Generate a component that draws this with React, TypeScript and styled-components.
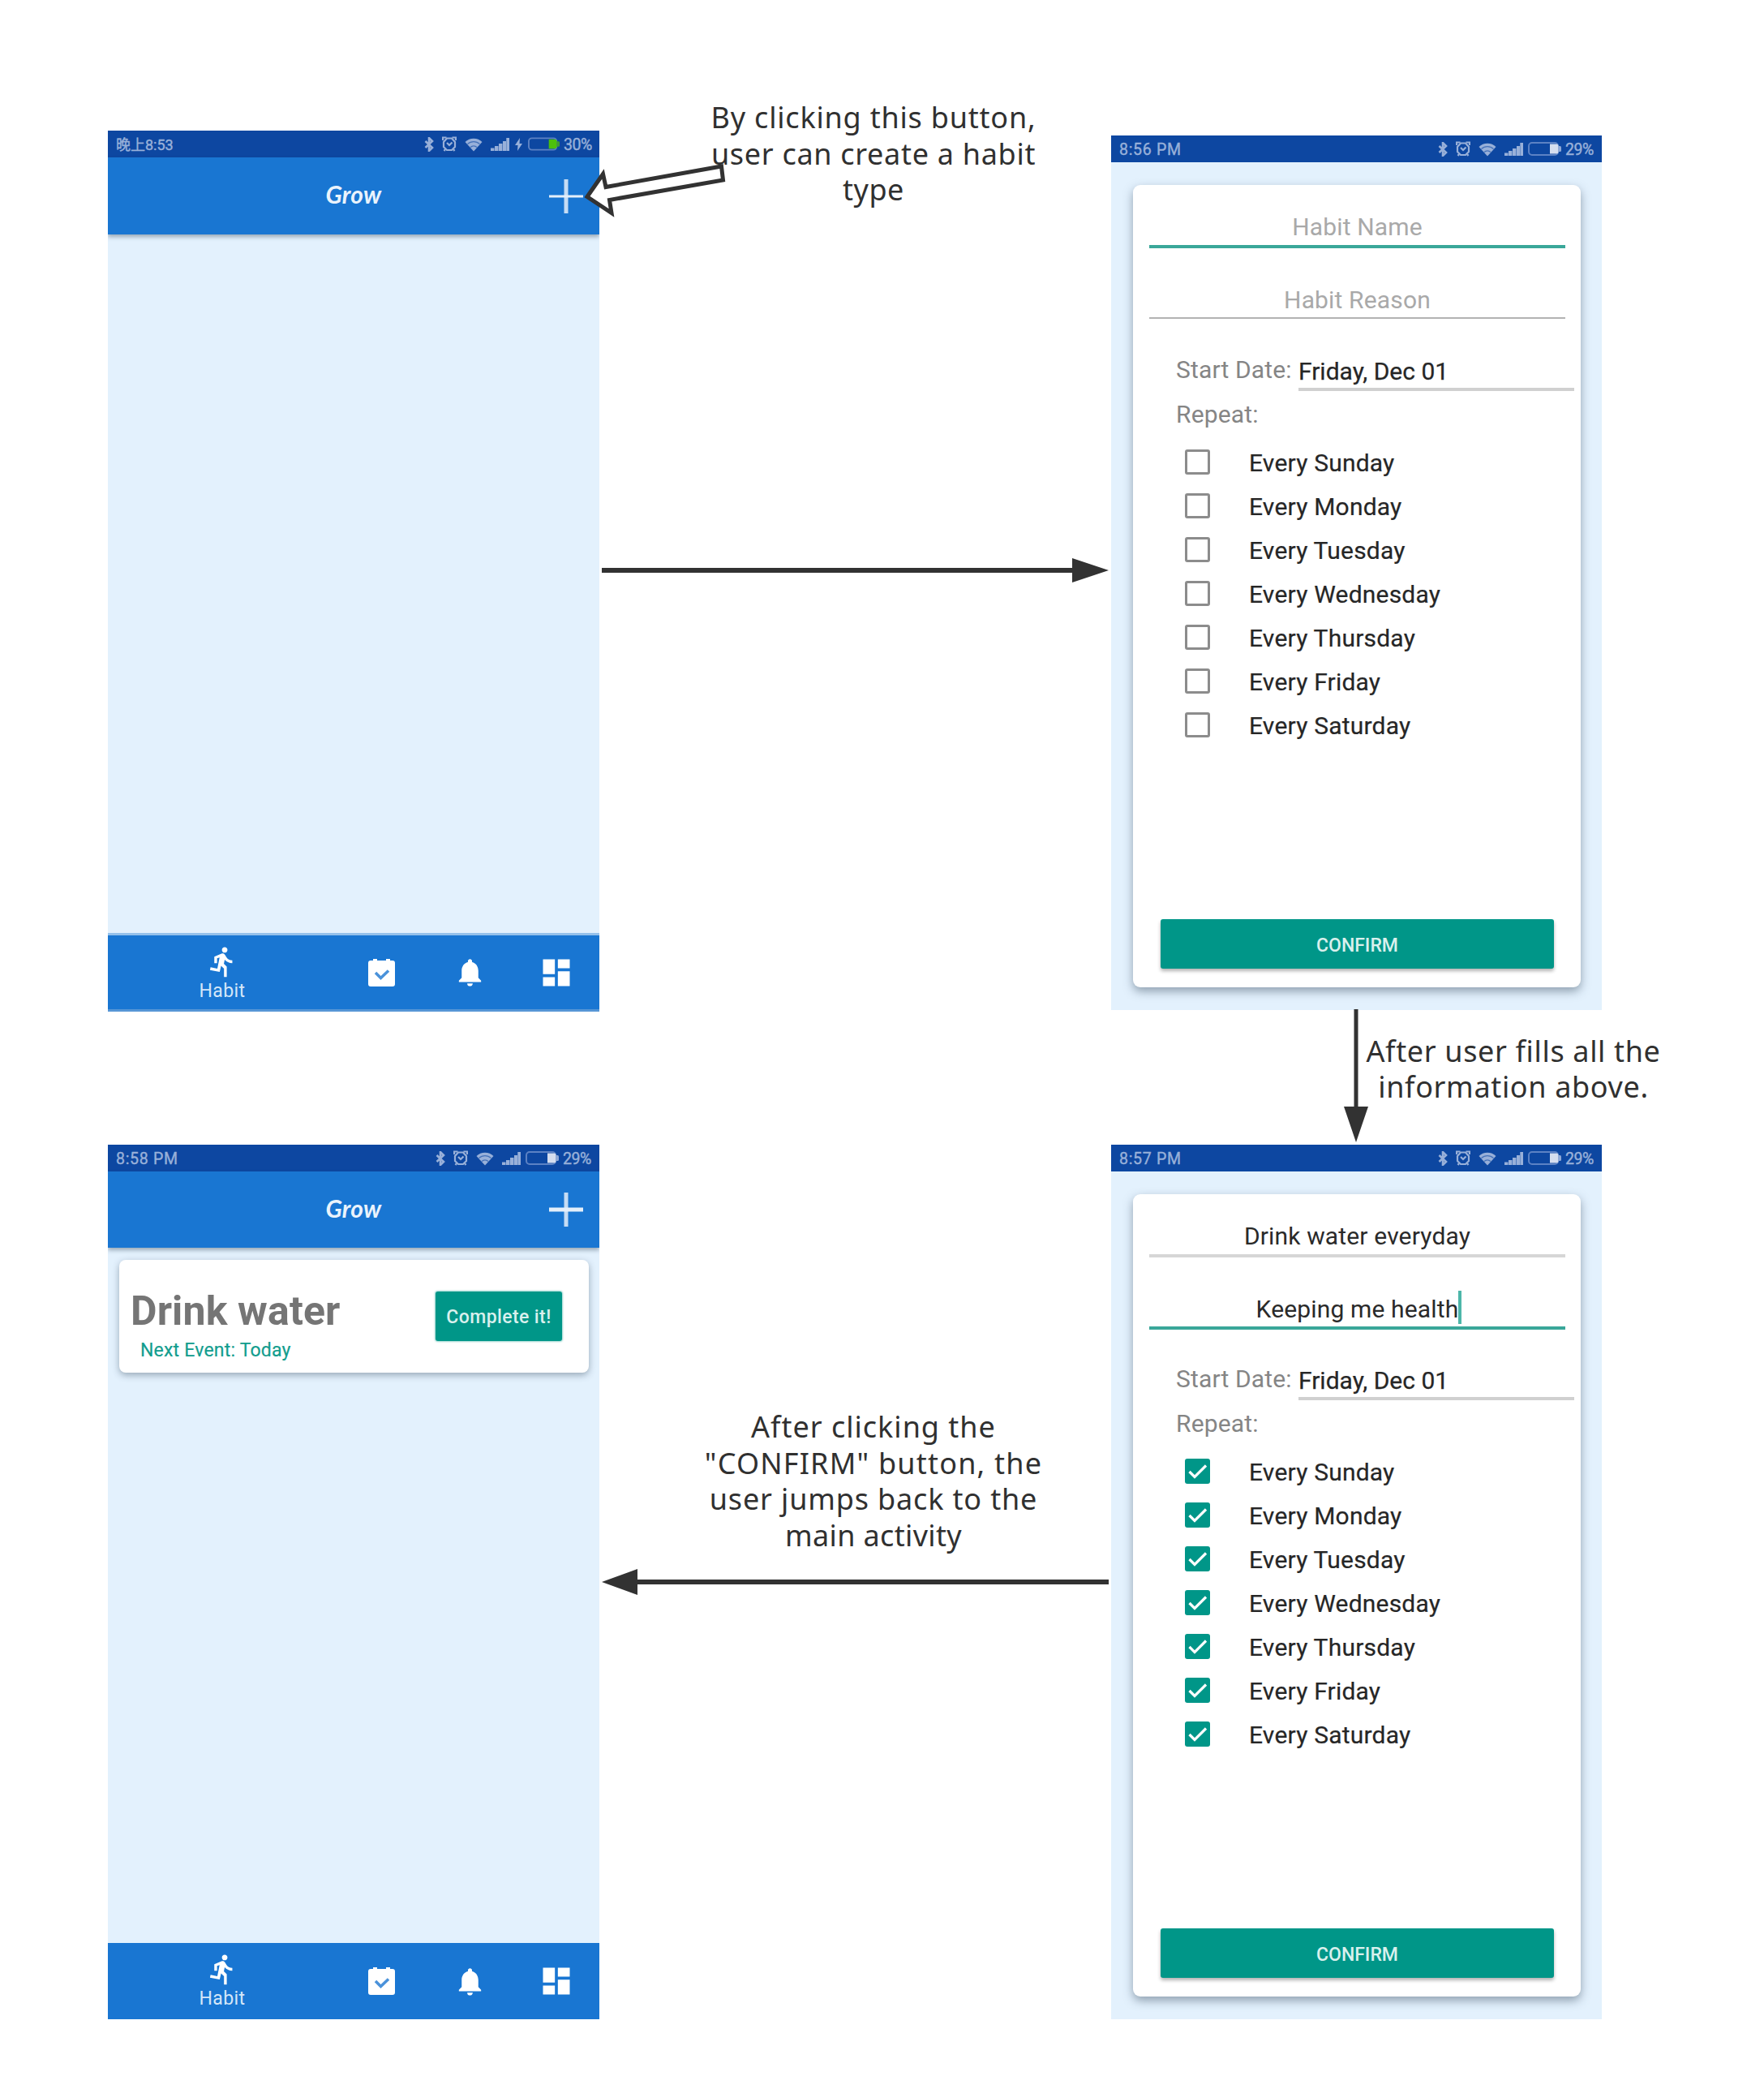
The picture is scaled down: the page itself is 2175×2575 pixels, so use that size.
import React from "react";
import styled, { createGlobalStyle } from "styled-components";
import { MdDashboard, MdDirectionsRun, MdNotifications } from "react-icons/md";

const Global = createGlobalStyle`
  * { box-sizing: border-box; }
  body { margin: 0; background: #fff; }
`;

const Canvas = styled.main`
  position: relative;
  width: 2175px;
  height: 2575px;
  overflow: hidden;
  background: #fff;
  font-family: Roboto, "Noto Sans CJK SC", sans-serif;
`;

/* ---------- diagram nodes ---------- */

const Phone = styled.section<{ $x: number; $y: number; $w: number; $h: number }>`
  position: absolute;
  left: ${(p) => p.$x}px;
  top: ${(p) => p.$y}px;
  width: ${(p) => p.$w}px;
  height: ${(p) => p.$h}px;
  display: flex;
  flex-direction: column;
  background: #e3f1fd;
  overflow: hidden;
  isolation: isolate;
`;

const Note = styled.p<{ $cx: number; $y: number }>`
  position: absolute;
  left: ${(p) => p.$cx - 250}px;
  top: ${(p) => p.$y}px;
  width: 500px;
  margin: 0;
  text-align: center;
  white-space: nowrap;
  font-family: "Noto Sans", sans-serif;
  font-size: 36px;
  line-height: 44.7px;
  color: #303030;
`;

const NoteLine = styled.span<{ $ls: number }>`
  display: block;
  letter-spacing: ${(p) => p.$ls}px;
`;

const Connectors = styled.svg`
  position: absolute;
  left: 0;
  top: 0;
`;

/* ---------- status bar ---------- */

const Bar = styled.div<{ $end: number }>`
  flex: none;
  height: 33px;
  padding: 0 ${(p) => p.$end}px 0 10px;
  display: flex;
  align-items: center;
  background: #0d47a1;
  color: #98b0d9;
  line-height: 33px;
`;

const Clock = styled.span<{ $cjk?: boolean }>`
  flex: 1;
  padding-top: 1px;
  font-size: ${(p) => (p.$cjk ? 18 : 19.5)}px;
  letter-spacing: ${(p) => (p.$cjk ? 0 : 0.7)}px;
  -webkit-text-stroke: 0.4px currentColor;
`;

const Icons = styled.div`
  display: flex;
  align-items: center;
  gap: 10px;
`;

const Power = styled.div<{ $gap: number }>`
  display: flex;
  align-items: center;
  gap: ${(p) => p.$gap}px;
  margin-left: ${(p) => p.$gap}px;
`;

const Percent = styled.span<{ $w: number }>`
  width: ${(p) => p.$w}px;
  margin-left: 5px;
  padding-top: 1px;
  font-size: 19.5px;
  letter-spacing: -0.4px;
  white-space: nowrap;
  -webkit-text-stroke: 0.4px currentColor;
`;

function StatusBar({ time, level, charging }: { time: string; level: string; charging?: boolean }) {
  return (
    <Bar $end={charging ? 8 : 11}>
      <Clock $cjk={charging}>{time}</Clock>
      <Icons>
        <svg width="12" height="18" viewBox="0 0 12 18" fill="none" stroke="currentColor" strokeWidth="2.600">
          <path d="M1.500 5l8.500 8-4 4V1l4 4-8.500 8" />
        </svg>
        <svg width="18" height="19" viewBox="0 0 18 19" fill="none" stroke="currentColor" strokeWidth="2.200">
          <path d="M1 5V1.500h4.500M12.500 1.500H17V5M4 16l-1.500 2M14 16l1.500 2" />
          <path d="M6 2.500h6l4 4.500v6l-4 4H6l-4-4V7z" />
          <path d="M6 8l3 3 3.500-3.500" />
        </svg>
        <svg width="22" height="18" viewBox="0 0 22 18">
          <path d="M11 17.500L0.500 6a15 15 0 0 1 21 0z" fill="currentColor" />
          <path d="M3.500 8.500a11 11 0 0 1 15 0M7 12.500a6 6 0 0 1 8 0" fill="none" stroke="#0d47a1" strokeOpacity="0.600" strokeWidth="1.300" />
        </svg>
        <svg width="23" height="16" viewBox="0 0 23 16" fill="currentColor">
          <path d="M0 12.500h4.500V16H0zM5 10h4.500v6H5zM10 7h4.500v9H10zM15 4h4v12h-4zM19.300 0H23v16h-3.700z" />
        </svg>
      </Icons>
      <Power $gap={charging ? 7 : 6}>
        {charging && (
          <svg width="9" height="16" viewBox="0 0 9 16" fill="currentColor">
            <path d="M6 0L0 9h3.500L3 16l6-9H5.500z" />
          </svg>
        )}
        <svg width={charging ? 39 : 41} height="17" viewBox="0 0 41 17">
          <rect x="1" y="1" width="36" height="15" rx="4" fill="none" stroke="#5c82c4" strokeWidth="2" />
          <path d="M27 2.500h8a2.500 2.500 0 0 1 2.500 2.500v7a2.500 2.500 0 0 1-2.500 2.500h-8z" fill={charging ? "#4cc00c" : "#d5deef"} />
          <path d="M37 5h2.500a1.500 1.500 0 0 1 1.500 1.500v4a1.500 1.500 0 0 1-1.500 1.500H37z" fill={charging ? "#3f9a35" : "#8fa9d6"} />
        </svg>
      </Power>
      <Percent $w={charging ? 36 : 34}>{level}</Percent>
    </Bar>
  );
}

/* ---------- main activity ---------- */

const Header = styled.header<{ $h: number }>`
  flex: none;
  height: ${(p) => p.$h}px;
  padding-right: 20px;
  display: grid;
  grid-template-columns: 1fr auto 1fr;
  align-items: center;
  background: #1976d2;
  box-shadow: 0 3px 5px rgba(40, 60, 80, 0.4);
  z-index: 1;
`;

const Title = styled.h1`
  grid-column: 2;
  margin: -5px 0 0 20px;
  font-family: Lato, sans-serif;
  font-style: italic;
  font-weight: 700;
  font-size: 30px;
  line-height: 36px;
  letter-spacing: 0.3px;
  color: #eaf3fc;
`;

const AddButton = styled.button`
  justify-self: end;
  display: flex;
  padding: 0;
  border: 0;
  background: none;
  color: #e4effa;
`;

const Content = styled.div`
  flex: 1;
  padding: 15px 13px 0 14px;
`;

const HabitCard = styled.article`
  height: 139px;
  padding: 0 33px 0 14px;
  display: flex;
  justify-content: space-between;
  border-radius: 8px;
  background: #fff;
  box-shadow: 0 3px 8px rgba(60, 80, 100, 0.45);
`;

const HabitInfo = styled.div`
  padding-top: 33px;
`;

const HabitName = styled.h2`
  margin: 0;
  font-size: 50px;
  font-weight: 700;
  line-height: 60px;
  letter-spacing: 0.15px;
  color: #757575;
`;

const NextEvent = styled.p`
  margin: 4px 0 0 12px;
  font-size: 23px;
  line-height: 30px;
  letter-spacing: 0.2px;
  color: #129d8e;
  -webkit-text-stroke: 0.2px currentColor;
`;

const CompleteButton = styled.button`
  width: 156px;
  height: 61px;
  margin-top: 39px;
  padding: 3px 0 0;
  border: 0;
  border-radius: 3px;
  background: #009688;
  box-shadow: 0 0 2px 1px rgba(0, 150, 136, 0.4);
  color: #d9f0ed;
  font: 500 23px/30px Roboto, sans-serif;
  letter-spacing: 0.4px;
`;

const Nav = styled.nav<{ $h: number; $edge?: boolean }>`
  flex: none;
  height: ${(p) => p.$h}px;
  display: grid;
  grid-template-columns: 282px 110px 108px 106px;
  border-top: ${(p) => (p.$edge ? "3px solid #95c1eb" : "0")};
  border-bottom: ${(p) => (p.$edge ? "3px solid #5796d6" : "0")};
  background: #1976d2;
  color: #fff;
`;

const Tab = styled.div`
  display: flex;
  align-items: center;
  justify-content: center;
`;

const ActiveTab = styled.div`
  padding-top: 12px;
  display: flex;
  flex-direction: column;
  align-items: center;
  gap: 3px;
  font-size: 23px;
  line-height: 26px;
  letter-spacing: 0.4px;
  color: #d5e6f8;

  svg { color: #fff; }
`;

function BottomNav({ h, edge }: { h: number; edge?: boolean }) {
  return (
    <Nav $h={h} $edge={edge}>
      <ActiveTab>
        <MdDirectionsRun size={41} />
        Habit
      </ActiveTab>
      <Tab>
        <svg width="33" height="34" viewBox="0 0 33 34">
          <path d="M3 2h3V0h5v2h11V0h5v2h3a3 3 0 0 1 3 3V31a3 3 0 0 1-3 3H3a3 3 0 0 1-3-3V5a3 3 0 0 1 3-3z" fill="#fff" />
          <path d="M9 17l6.500 6.500L25 14.500" fill="none" stroke="#4a92da" strokeWidth="3.500" />
        </svg>
      </Tab>
      <Tab>
        <MdNotifications size={41} />
      </Tab>
      <Tab>
        <MdDashboard size={44} />
      </Tab>
    </Nav>
  );
}

function MainScreen(props: { y: number; h: number; time: string; level: string; charging?: boolean; headerH: number; navH: number; edge?: boolean; children?: React.ReactNode }) {
  return (
    <Phone $x={133} $y={props.y} $w={606} $h={props.h}>
      <StatusBar time={props.time} level={props.level} charging={props.charging} />
      <Header $h={props.headerH}>
        <Title>Grow</Title>
        <AddButton aria-label="Add habit">
          <svg width="42" height="42" viewBox="0 0 42 42" stroke="currentColor">
            <path d="M0 21h42" strokeWidth={props.charging ? 3 : 5} />
            <path d="M21 0v42" strokeWidth="5" strokeOpacity="0.850" />
          </svg>
        </AddButton>
      </Header>
      <Content>{props.children}</Content>
      <BottomNav h={props.navH} edge={props.edge} />
    </Phone>
  );
}

/* ---------- habit form ---------- */

const FormCard = styled.form`
  height: 989px;
  margin: 28px 26px 0 27px;
  padding: 32px 0 23px;
  display: flex;
  flex-direction: column;
  border-radius: 9px;
  background: #fff;
  box-shadow: 0 5px 12px rgba(60, 80, 100, 0.5);
  font-size: 30px;
  line-height: 40px;
  letter-spacing: 0.15px;
`;

const Field = styled.div<{ $h: number; $placeholder?: boolean }>`
  height: ${(p) => p.$h}px;
  margin: 0 19px 0 20px;
  text-align: center;
  color: ${(p) => (p.$placeholder ? "#a9a9a9" : "#2a2a2a")};
`;

const FieldText = styled.div`
  height: 40px;
  display: flex;
  justify-content: center;
`;

const Caret = styled.span`
  width: 4px;
  height: 41px;
  margin: -3px -4px 0 0;
  background: #4db6a9;
`;

const Underline = styled.div<{ $focus?: boolean; $thin?: boolean }>`
  height: ${(p) => (p.$focus ? 4 : p.$thin ? 2 : 4)}px;
  margin-top: ${(p) => (p.$thin ? 1 : 2)}px;
  background: ${(p) => (p.$focus ? "#3aa799" : p.$thin ? "#b3b3b3" : "#d6d6d6")};
`;

const DateRow = styled.div`
  height: 55px;
  display: flex;
  padding-left: 53px;
`;

const Label = styled.div`
  width: 151px;
  color: #858585;
`;

const DateValue = styled.div`
  width: 340px;
  height: 44px;
  margin-top: 2px;
  border-bottom: 4px solid #d0d0d0;
  letter-spacing: 0;
  color: #262626;
  -webkit-text-stroke: 0.25px currentColor;
`;

const RepeatLabel = styled.div`
  height: 53px;
  padding-left: 53px;
  color: #858585;
`;

const Day = styled.div`
  flex: none;
  height: 54px;
  padding-left: 64px;
  display: flex;
  align-items: center;
  gap: 48px;
  letter-spacing: 0.2px;
  color: #262626;
  -webkit-text-stroke: 0.2px currentColor;
`;

const Box = styled.span<{ $on?: boolean }>`
  width: 31px;
  height: 31px;
  margin-top: -4px;
  display: flex;
  border: ${(p) => (p.$on ? "0" : "3px solid #8c8c8c")};
  border-radius: 3px;
  background: ${(p) => (p.$on ? "#009688" : "#fff")};
`;

const ConfirmButton = styled.button`
  height: 61px;
  margin: auto 33px 0 34px;
  padding: 4px 0 0;
  border: 0;
  border-radius: 3px;
  background: #009688;
  box-shadow: 0 3px 4px rgba(0, 0, 0, 0.3);
  color: #d9f0ed;
  font: 500 23px/30px Roboto, sans-serif;
`;

const DAYS = ["Sunday", "Monday", "Tuesday", "Wednesday", "Thursday", "Friday", "Saturday"];

function FormScreen({ y, time, name, reason }: { y: number; time: string; name?: string; reason?: string }) {
  const filled = Boolean(name);
  return (
    <Phone $x={1370} $y={y} $w={605} $h={1077.5}>
      <StatusBar time={time} level="29%" />
      <FormCard>
        <Field $h={90} $placeholder={!filled}>
          <FieldText>{name ?? "Habit Name"}</FieldText>
          <Underline $focus={!filled} />
        </Field>
        <Field $h={86} $placeholder={!filled}>
          <FieldText>
            {reason ?? "Habit Reason"}
            {filled && <Caret />}
          </FieldText>
          <Underline $focus={filled} $thin />
        </Field>
        <DateRow>
          <Label>Start Date:</Label>
          <DateValue>Friday, Dec 01</DateValue>
        </DateRow>
        <RepeatLabel>Repeat:</RepeatLabel>
        {DAYS.map((d) => (
          <Day key={d}>
            <Box $on={filled}>
              {filled && (
                <svg width="31" height="31" viewBox="0 0 31 31" fill="none" stroke="#fff" strokeWidth="3.200">
                  <path d="M5.500 16l6.500 6.500L26 8.500" />
                </svg>
              )}
            </Box>
            Every {d}
          </Day>
        ))}
        <ConfirmButton type="button">CONFIRM</ConfirmButton>
      </FormCard>
    </Phone>
  );
}

export default function App() {
  return (
    <Canvas>
      <Global />
      <MainScreen y={161} h={1086} time="晚上8:53" level="30%" charging headerH={95} navH={97} edge />
      <FormScreen y={167} time="8:56 PM" />
      <MainScreen y={1411} h={1078} time="8:58 PM" level="29%" headerH={94} navH={94}>
        <HabitCard>
          <HabitInfo>
            <HabitName>Drink water</HabitName>
            <NextEvent>Next Event: Today</NextEvent>
          </HabitInfo>
          <CompleteButton>Complete it!</CompleteButton>
        </HabitCard>
      </MainScreen>
      <FormScreen y={1411} time="8:57 PM" name="Drink water everyday" reason="Keeping me health" />

      <Note $cx={1077} $y={123}>
        <NoteLine $ls={0.8}>By clicking this button,</NoteLine>
        <NoteLine $ls={0.7}>user can create a habit</NoteLine>
        <NoteLine $ls={0.5}>type</NoteLine>
      </Note>
      <Note $cx={1866} $y={1273.5}>
        <NoteLine $ls={0.65}>After user fills all the</NoteLine>
        <NoteLine $ls={0.65}>information above.</NoteLine>
      </Note>
      <Note $cx={1077} $y={1737}>
        <NoteLine $ls={1}>After clicking the</NoteLine>
        <NoteLine $ls={1.2}>"CONFIRM" button, the</NoteLine>
        <NoteLine $ls={0.85}>user jumps back to the</NoteLine>
        <NoteLine $ls={0.35}>main activity</NoteLine>
      </Note>

      <Connectors width="2175" height="2575" viewBox="0 0 2175 2575" fill="#323232">
        <path d="M742 700h580v-12l45 15-45 15v-12H742z" />
        <path d="M1669.500 1244h5v120h12.500l-15 44-15-44h12.500z" />
        <path d="M1367 1947v6H786v13l-44-16 44-16v13z" />
        <path d="M724 242.500L743.500 214.500L747 230.500L889.500 205L891.500 222L751.500 246.500L754 262.500Z" fill="#fff" stroke="#323232" strokeWidth="5" />
      </Connectors>
    </Canvas>
  );
}
